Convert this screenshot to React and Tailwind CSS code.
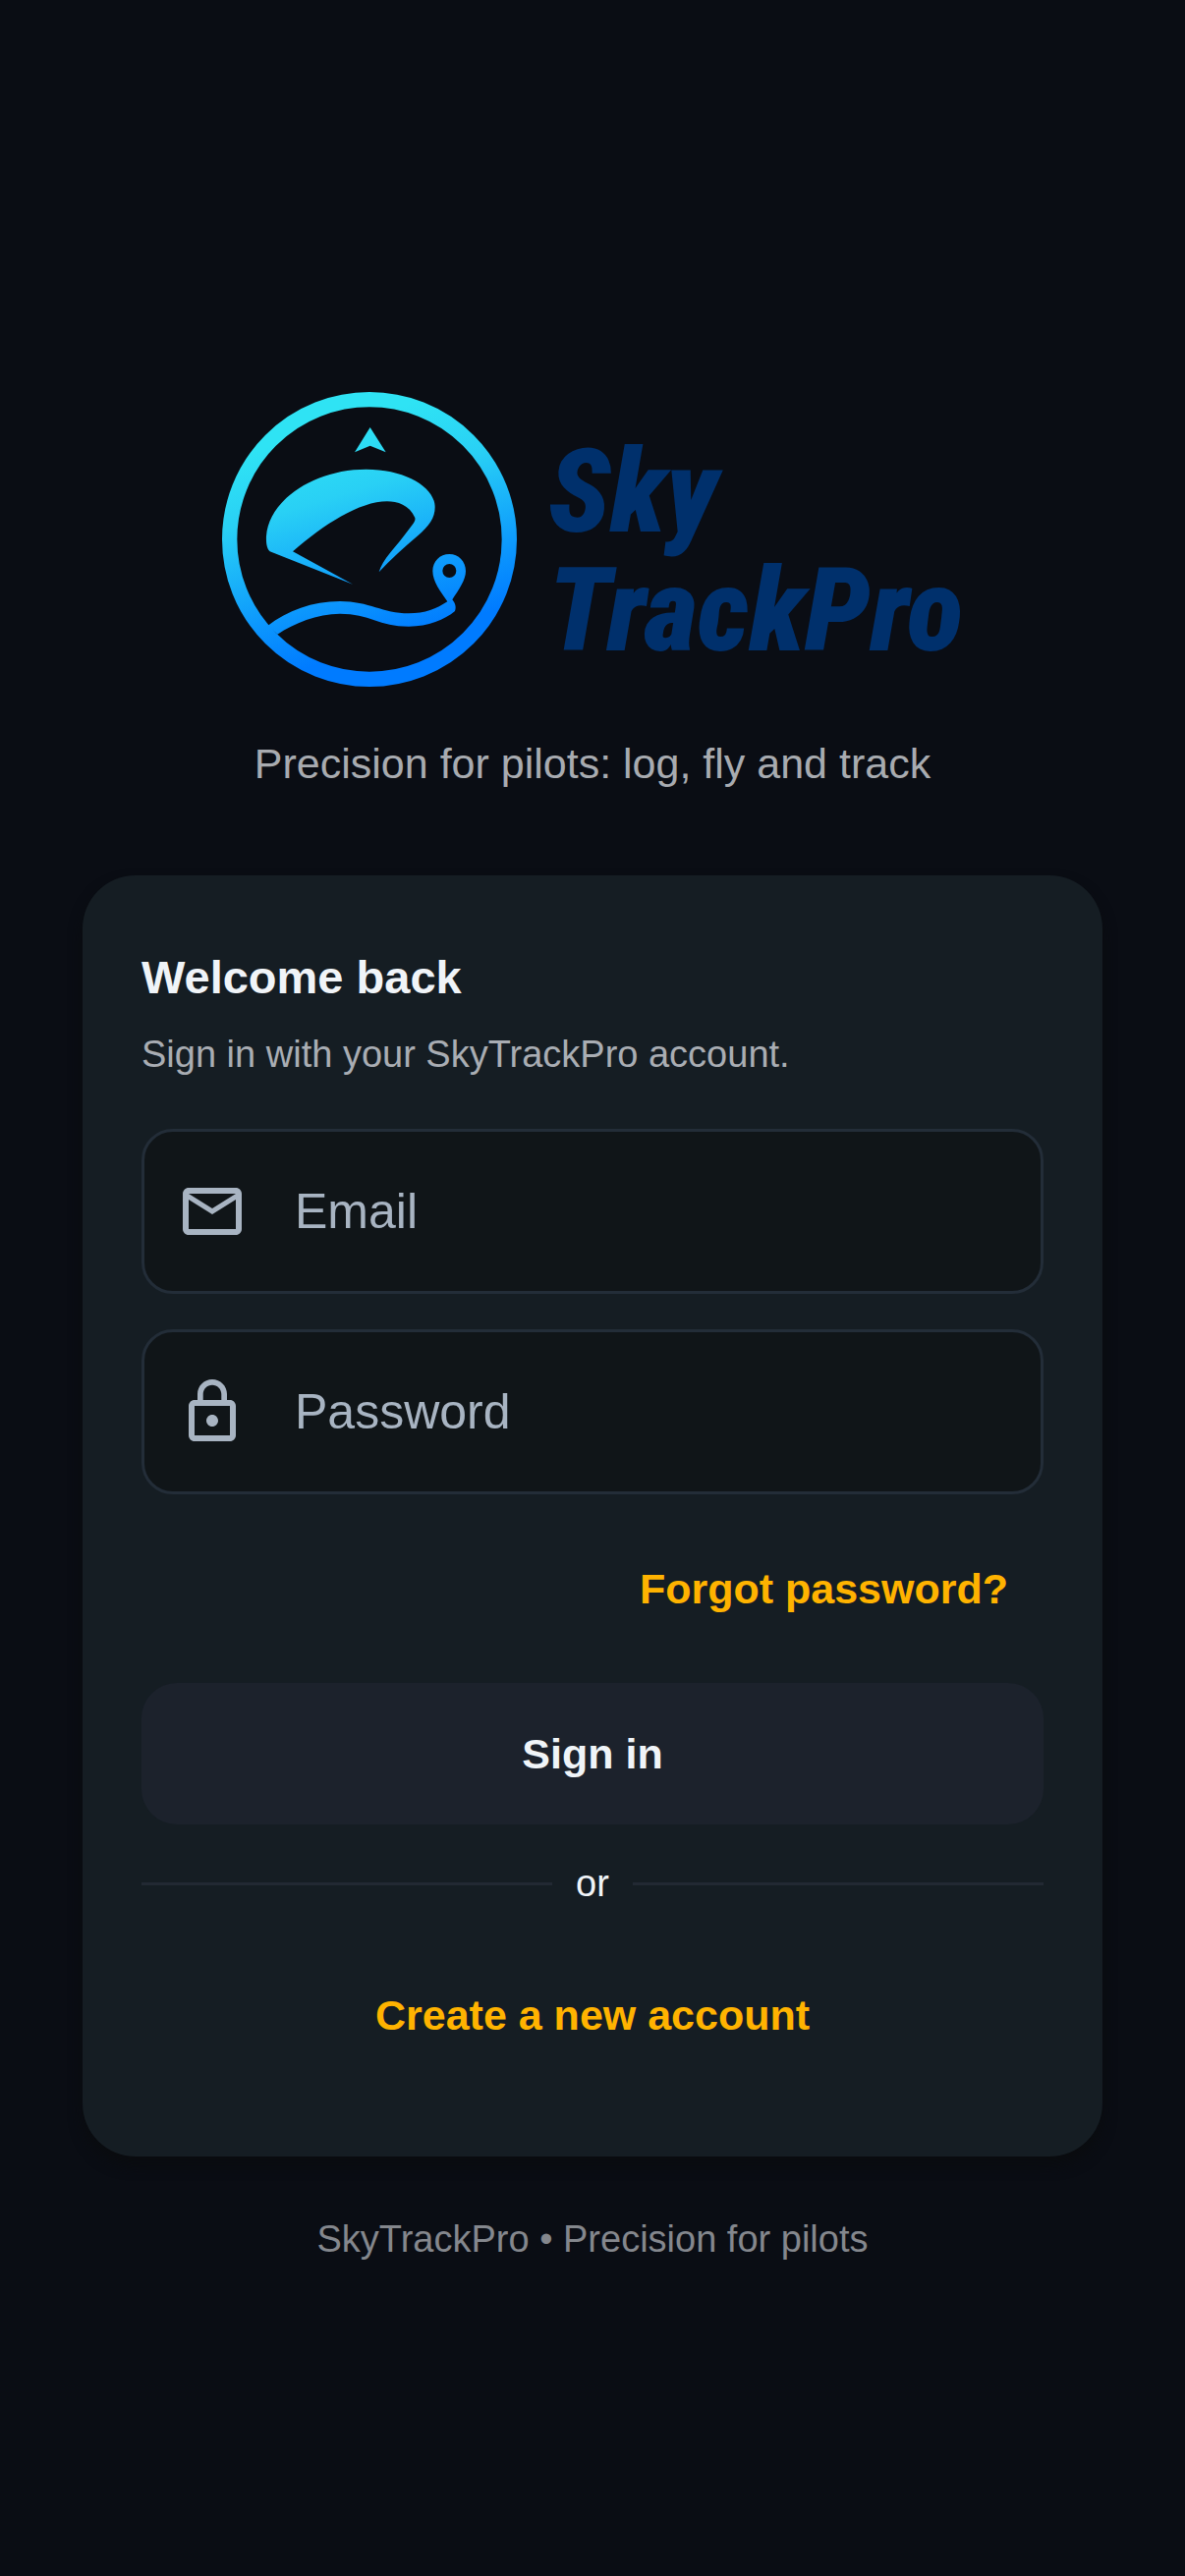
import { useState } from 'react'
import { MdLockOutline, MdMailOutline } from 'react-icons/md'

const FIELDS = [
  { name: 'email', type: 'email', label: 'Email', Icon: MdMailOutline },
  { name: 'password', type: 'password', label: 'Password', Icon: MdLockOutline },
]

function LogoMark() {
  return (
    <svg viewBox="0 0 900 900" className="size-[300px] shrink-0" aria-hidden="true">
      <defs>
        <linearGradient id="sky" gradientUnits="userSpaceOnUse" x1="330" y1="110" x2="530" y2="760">
          <stop offset="0" stopColor="#2fe3f4" />
          <stop offset="0.3" stopColor="#29d0f5" />
          <stop offset="0.75" stopColor="#0c97fd" />
          <stop offset="1" stopColor="#007bff" />
        </linearGradient>
      </defs>
      <circle cx="450" cy="450" r="427" fill="none" stroke="url(#sky)" strokeWidth="46" />
      <g fill="url(#sky)">
        <path d="M452 108 L500 184 L452 164 L405 184 Z" />
        <path d="M399 587 L146 487 C137 480 134 463 135 440 C143 330 280 236 440 236 C560 236 650 290 650 352 C650 385 632 410 596 440 C555 475 515 510 479 550 C490 510 530 475 570 420 C585 400 591 395 589 384 C572 345 535 334 504 334 C420 334 310 405 216 487 Z" />
        <path
          fillRule="evenodd"
          d="M694 495 C722 495 744 517 744 547 C744 575 722 605 703 634 C712 645 716 658 711 669 C680 695 630 716 570 716 C480 716 450 677 360 677 C290 677 220 706 169 740 L140 713 C200 668 275 639 360 639 C450 639 490 676 570 676 C620 676 655 662 688 640 C668 610 643 580 643 547 C643 517 665 495 694 495 Z M694 525 A21 21 0 1 0 694 567 A21 21 0 1 0 694 525 Z"
        />
      </g>
    </svg>
  )
}

export default function App() {
  const [values, setValues] = useState({ email: '', password: '' })

  return (
    <main className="flex min-h-screen flex-col items-center bg-[#0a0d14] px-[84px] pt-[399px] pb-20 font-['Liberation_Sans',Arial,sans-serif]">
      {/* Brand */}
      <header className="flex flex-col items-center">
        <div className="flex items-center gap-8">
          <LogoMark />
          <h1 className="pt-6 font-['Roboto_Condensed','Liberation_Sans_Narrow',sans-serif] text-[119px] leading-[121px] font-black text-[#00306c] italic">
            <span className="block">Sky</span>
            <span className="block">TrackPro</span>
          </h1>
        </div>
        <p className="mt-[52px] text-[43px] leading-[52px] text-[#a8abb0]">
          Precision for pilots: log, fly and track
        </p>
      </header>

      {/* Sign-in card */}
      <section className="mt-[88px] w-full rounded-[54px] bg-[#151d23] px-[60px] pt-[74px] pb-[72px] shadow-[0_9px_14px_#0a0c0f]">
        <h2 className="text-[47px] leading-[60px] font-bold text-[#f0f4f8]">Welcome back</h2>
        <p className="mt-6 text-[38px] leading-[48px] text-[#a9adb3]">
          Sign in with your SkyTrackPro account.
        </p>

        <form className="mt-[52px]" onSubmit={(e) => e.preventDefault()}>
          <div className="flex flex-col gap-9">
            {FIELDS.map(({ name, type, label, Icon }) => (
              <div
                key={name}
                className="flex h-[168px] items-center gap-12 rounded-[32px] border-3 border-[#232d38] bg-[#101518] px-[33px]"
              >
                <Icon className="size-[72px] shrink-0 text-[#a8b4c2]" />
                <input
                  id={name}
                  type={type}
                  aria-label={label}
                  placeholder={label}
                  value={values[name]}
                  onChange={(e) => setValues({ ...values, [name]: e.target.value })}
                  className="min-w-0 flex-1 bg-transparent text-[50px] leading-[72px] text-[#f0f4f8] outline-none placeholder:text-[#a8b4c2]"
                />
              </div>
            ))}
          </div>

          <div className="mt-9 flex justify-end">
            <a href="#forgot" className="px-9 py-9 text-[43px] leading-[48px] font-bold text-[#ffb300]">
              Forgot password?
            </a>
          </div>

          <button
            type="submit"
            className="mt-9 h-[144px] w-full rounded-[36px] bg-[#1c222c] text-[43px] leading-[48px] font-bold text-[#f0f4f8]"
          >
            Sign in
          </button>
        </form>

        <div className="mt-9 flex items-center gap-6">
          <div className="h-[3px] flex-1 bg-[#222933]" />
          <span className="text-[38px] leading-[48px] text-[#f0f4f8]">or</span>
          <div className="h-[3px] flex-1 bg-[#222933]" />
        </div>

        <div className="mt-[38px] flex justify-center">
          <a href="#register" className="px-9 py-12 text-[43px] leading-[48px] font-bold text-[#ffb300]">
            Create a new account
          </a>
        </div>
      </section>

      <footer className="mt-[60px] text-[38px] leading-[48px] text-[#84878d]">
        SkyTrackPro • Precision for pilots
      </footer>
    </main>
  )
}
